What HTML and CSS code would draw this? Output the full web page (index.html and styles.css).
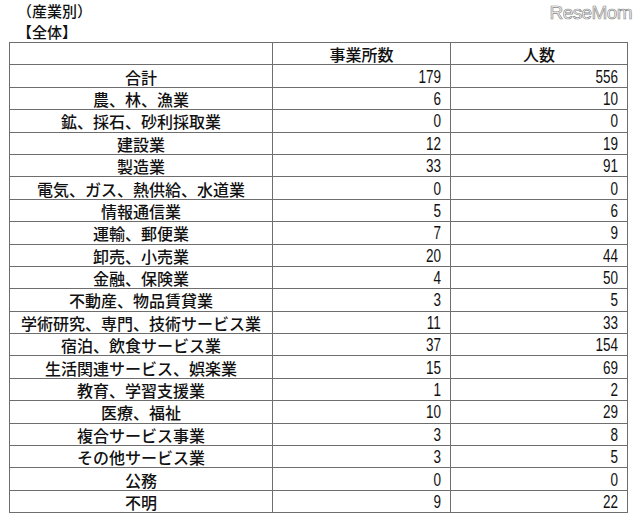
FILE: index.html
```html
<!DOCTYPE html>
<html lang="ja">
<head>
<meta charset="utf-8">
<link rel="stylesheet" href="styles.css">
</head>
<body>
<div class="page">
  <div class="logo">ReseMom</div>
  <div class="title">
    <div class="t1">（産業別）</div>
    <div class="t2">【全体】</div>
  </div>
  <div class="grid">
    <div class="c lab"></div><div class="c hd">事業所数</div><div class="c hd">人数</div>
    <div class="c lab">合計</div><div class="c num"><span>179</span></div><div class="c num"><span>556</span></div>
    <div class="c lab">農、林、漁業</div><div class="c num"><span>6</span></div><div class="c num"><span>10</span></div>
    <div class="c lab">鉱、採石、砂利採取業</div><div class="c num"><span>0</span></div><div class="c num"><span>0</span></div>
    <div class="c lab">建設業</div><div class="c num"><span>12</span></div><div class="c num"><span>19</span></div>
    <div class="c lab">製造業</div><div class="c num"><span>33</span></div><div class="c num"><span>91</span></div>
    <div class="c lab">電気、ガス、熱供給、水道業</div><div class="c num"><span>0</span></div><div class="c num"><span>0</span></div>
    <div class="c lab">情報通信業</div><div class="c num"><span>5</span></div><div class="c num"><span>6</span></div>
    <div class="c lab">運輸、郵便業</div><div class="c num"><span>7</span></div><div class="c num"><span>9</span></div>
    <div class="c lab">卸売、小売業</div><div class="c num"><span>20</span></div><div class="c num"><span>44</span></div>
    <div class="c lab">金融、保険業</div><div class="c num"><span>4</span></div><div class="c num"><span>50</span></div>
    <div class="c lab">不動産、物品賃貸業</div><div class="c num"><span>3</span></div><div class="c num"><span>5</span></div>
    <div class="c lab">学術研究、専門、技術サービス業</div><div class="c num"><span>11</span></div><div class="c num"><span>33</span></div>
    <div class="c lab">宿泊、飲食サービス業</div><div class="c num"><span>37</span></div><div class="c num"><span>154</span></div>
    <div class="c lab">生活関連サービス、娯楽業</div><div class="c num"><span>15</span></div><div class="c num"><span>69</span></div>
    <div class="c lab">教育、学習支援業</div><div class="c num"><span>1</span></div><div class="c num"><span>2</span></div>
    <div class="c lab">医療、福祉</div><div class="c num"><span>10</span></div><div class="c num"><span>29</span></div>
    <div class="c lab">複合サービス事業</div><div class="c num"><span>3</span></div><div class="c num"><span>8</span></div>
    <div class="c lab">その他サービス業</div><div class="c num"><span>3</span></div><div class="c num"><span>5</span></div>
    <div class="c lab">公務</div><div class="c num"><span>0</span></div><div class="c num"><span>0</span></div>
    <div class="c lab">不明</div><div class="c num"><span>9</span></div><div class="c num"><span>22</span></div>
  </div>
</div>
</body>
</html>
```
FILE: styles.css
```css
html, body {
  margin: 0;
  padding: 0;
  background: #ffffff;
}
.page {
  position: relative;
  width: 640px;
  height: 526px;
  overflow: hidden;
  font-family: "Noto Sans CJK JP", "Noto Sans", sans-serif;
  color: #111;
}
.logo {
  position: absolute;
  top: 2px;
  right: 8px;
  font-family: "Liberation Sans", Arial, sans-serif;
  font-size: 19px;
  letter-spacing: -0.6px;
  color: #fff;
  -webkit-text-stroke: 0.7px #8a8a8a;
}
.title {
  padding: 1px 0 0 17px;
  font-size: 15px;
  font-weight: 500;
  height: 42px;
  box-sizing: border-box;
  display: flex;
  flex-direction: column;
}
.t1, .t2 {
  height: 20.5px;
  line-height: 20.5px;
}
.grid {
  margin-left: 9px;
  width: 619px;
  box-sizing: border-box;
  display: grid;
  grid-template-columns: 262px 177px 176px;
  grid-auto-rows: 21.4px;
  gap: 1px;
  padding: 1px;
  background: #6e6e6e;
}
.c {
  background: #fff;
  display: flex;
  align-items: center;
  font-size: 16px;
  font-weight: 500;
  line-height: 1;
  padding-top: 1px;
  box-sizing: border-box;
}
.lab, .hd {
  justify-content: center;
}
.num {
  justify-content: flex-end;
  padding-right: 9px;
  font-family: "Liberation Sans", Arial, sans-serif;
  font-size: 18px;
  font-weight: 400;
}
.num span {
  display: inline-block;
  transform: scaleX(0.75);
  transform-origin: right center;
}
```
